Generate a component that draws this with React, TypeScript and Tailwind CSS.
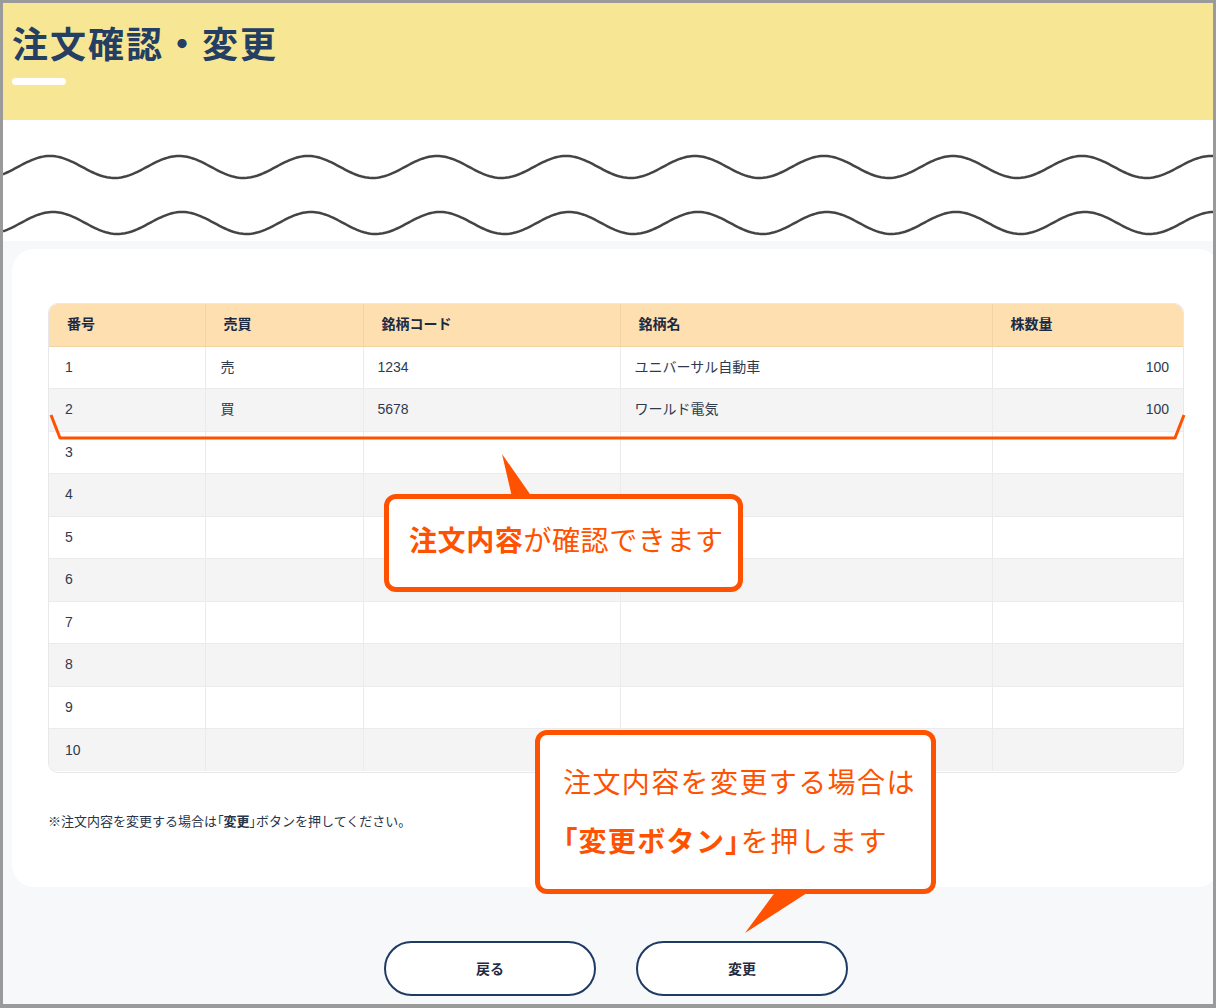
import React from 'react';

const rows = [
  { no: 1, side: '売', code: '1234', name: 'ユニバーサル自動車', qty: '100' },
  { no: 2, side: '買', code: '5678', name: 'ワールド電気', qty: '100' },
  ...Array.from({ length: 8 }, (_, i) => ({ no: i + 3, side: '', code: '', name: '', qty: '' })),
];

// wave line across the strip under the header
function wavePath(cy: number, peakX: number) {
  let d = '';
  for (let x = 0; x <= 1212; x += 2) {
    const y = cy - 11 * Math.cos((2 * Math.PI * (x - peakX)) / 129);
    d += `${x === 0 ? 'M' : 'L'}${x} ${y.toFixed(2)} `;
  }
  return d;
}

const ORANGE = '#ff5200';

export default function App() {
  return (
    <div className="relative w-[1216px] h-[1008px] font-['Noto_Sans_CJK_JP',sans-serif]">
      <div className="flex h-full flex-col overflow-hidden border-[3px] border-b-4 border-[#9a9a9a] bg-[#f7f8fa]">
        {/* header */}
        <div className="h-[117px] shrink-0 bg-[#f7e794] px-[9px] pt-[21px]">
          <h1 className="text-[36px] font-bold leading-none tracking-[2px] text-[#243e64]">注文確認・変更</h1>
          <div className="mt-[18px] h-[7px] w-[54px] rounded-full bg-white" />
        </div>

        {/* waves */}
        <div className="h-[121px] shrink-0 bg-white">
          <svg width="1210" height="121" viewBox="0 0 1210 121" fill="none">
            <path d={wavePath(47, 47)} stroke="#444" strokeWidth="2.5" />
            <path d={wavePath(103, 50)} stroke="#444" strokeWidth="2.5" />
          </svg>
        </div>

        {/* card */}
        <div className="ml-[9px] mt-[8px] h-[638px] w-[1208px] shrink-0 rounded-[22px] bg-white px-[36px] pt-[54px]">
          <div className="h-[470px] overflow-hidden rounded-[10px] border border-[#e6e8eb]">
            <table className="w-full table-fixed border-collapse font-['Liberation_Sans','Noto_Sans_CJK_JP',sans-serif] text-[14px]">
              <colgroup>
                <col className="w-[156px]" />
                <col className="w-[158px]" />
                <col className="w-[257px]" />
                <col className="w-[372px]" />
                <col />
              </colgroup>
              <thead>
                <tr className="h-[42px] bg-[#fddfb0] text-left text-[#1c2a44]">
                  <th className="border-r border-b border-[#f1d4a4] pl-[18px] font-bold">番号</th>
                  <th className="border-r border-b border-[#f1d4a4] pl-[18px] font-bold">売買</th>
                  <th className="border-r border-b border-[#f1d4a4] pl-[18px] font-bold">銘柄コード</th>
                  <th className="border-r border-b border-[#f1d4a4] pl-[18px] font-bold">銘柄名</th>
                  <th className="border-b border-[#f1d4a4] pl-[18px] font-bold">株数量</th>
                </tr>
              </thead>
              <tbody className="text-[#2f3a4f]">
                {rows.map((r, i) => (
                  <tr key={r.no} className={`h-[42.5px] ${i % 2 === 1 ? 'bg-[#f4f4f4]' : 'bg-white'}`}>
                    <td className={`border-r border-[#ebebeb] pl-[16px] ${i < 9 ? 'border-b' : ''}`}>{r.no}</td>
                    <td className={`border-r border-[#ebebeb] pl-[15px] ${i < 9 ? 'border-b' : ''}`}>{r.side}</td>
                    <td className={`border-r border-[#ebebeb] pl-[14px] ${i < 9 ? 'border-b' : ''}`}>{r.code}</td>
                    <td className={`border-r border-[#ebebeb] pl-[14px] ${i < 9 ? 'border-b' : ''}`}>{r.name}</td>
                    <td className={`border-[#ebebeb] pr-[14px] text-right ${i < 9 ? 'border-b' : ''}`}>{r.qty}</td>
                  </tr>
                ))}
              </tbody>
            </table>
          </div>
          <p className="mt-[38px] h-[20px] text-[13px] leading-[20px] text-[#2a3448]">
            ※注文内容を変更する場合は<span className="[font-feature-settings:'palt']">「</span>
            <span className="font-bold">変更</span>
            <span className="[font-feature-settings:'palt']">」</span>ボタンを押してください。
          </p>
        </div>

        {/* buttons */}
        <div className="ml-[9px] mt-[54px] flex w-[1208px] justify-center gap-[40px]">
          <button className="h-[55px] w-[212px] rounded-full border-2 border-[#1f3b63] bg-white text-[14px] font-bold text-[#1f2b40]">
            戻る
          </button>
          <button className="h-[55px] w-[212px] rounded-full border-2 border-[#1f3b63] bg-white text-[14px] font-bold text-[#1f2b40]">
            変更
          </button>
        </div>
      </div>

      {/* annotation overlays */}
      <svg className="pointer-events-none absolute left-0 top-0" width="1216" height="1008" viewBox="0 0 1216 1008" fill="none">
        <polyline points="51,415 60,438 1175,438 1184,415" stroke={ORANGE} strokeWidth="3" strokeLinejoin="round" />
        <polygon points="502,454 512,497 532,497" fill={ORANGE} />
        <polygon points="776,891 810,891 745,933" fill={ORANGE} />
      </svg>

      <div className="absolute left-[384px] top-[494px] flex h-[98px] w-[359px] items-center rounded-[12px] border-[5px] border-[#ff5200] bg-white pb-[9px] pl-[20px]">
        <p className="text-[28px] leading-none tracking-[0.6px] text-[#ff5200]">
          <span className="font-bold">注文内容</span>が確認できます
        </p>
      </div>

      <div className="absolute left-[535px] top-[730px] h-[164px] w-[401px] rounded-[12px] border-[5px] border-[#ff5200] bg-white pl-[23px] pt-[17px]">
        <p className="text-[28px] leading-[59px] tracking-[1.4px] text-[#ff5200]">
          注文内容を変更する場合は
          <br />
          <span className="font-bold">
            <span className="[font-feature-settings:'palt']">「</span>変更ボタン<span className="[font-feature-settings:'palt']">」</span>
          </span>
          を押します
        </p>
      </div>
    </div>
  );
}
